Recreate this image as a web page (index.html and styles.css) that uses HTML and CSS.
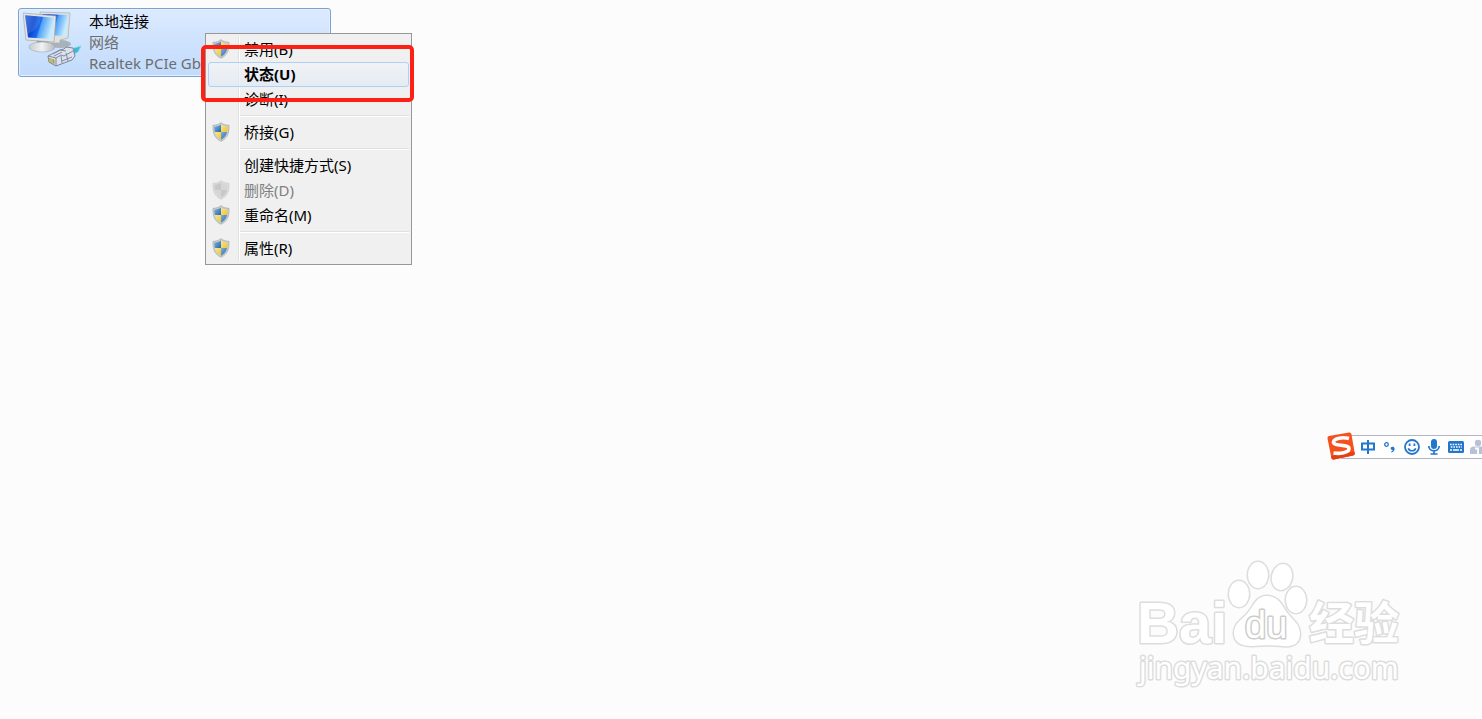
FILE: index.html
```html
<!DOCTYPE html>
<html lang="zh-CN">
<head>
	<meta charset="UTF-8">
	<meta name="viewport" content="width=device-width, initial-scale=1">
	<title>网络连接</title>
	<link rel="stylesheet" href="styles.css">
</head>
<body>
	<svg class="defs" aria-hidden="true">
		<linearGradient id="blue" x1="0" y1="0" x2="1" y2="1">
			<stop offset="0" stop-color="#7fb2dd"/>
			<stop offset="1" stop-color="#2468b4"/>
		</linearGradient>
		<linearGradient id="yellow" x1="0" y1="0" x2="1" y2="1">
			<stop offset="0" stop-color="#fbe88c"/>
			<stop offset="1" stop-color="#eec32c"/>
		</linearGradient>
		<symbol id="shield" viewBox="0 0 18 20">
			<path d="M9 .6C11 2.400 13.500 3.200 17 3.300c.2 7.600-1.200 12.700-8 16C2.200 16 .8 10.900 1 3.300 4.500 3.200 7 2.400 9 .6z" fill="#c9cdce" stroke="#a4abae" stroke-width=".7"/>
			<path d="M9 2.600V10H2.900C2.400 8.200 2.300 6.600 2.400 4.700 5 4.500 7.200 4 9 2.600z" fill="url(#blue)"/>
			<path d="M9 2.600V10h6.100c.5-1.800.6-3.400.5-5.300C13 4.500 10.800 4 9 2.600z" fill="url(#yellow)"/>
			<path d="M9 10H2.900c.9 3.500 2.600 6 6.100 7.800z" fill="url(#yellow)"/>
			<path d="M9 10h6.100c-.9 3.500-2.600 6-6.100 7.800z" fill="url(#blue)"/>
		</symbol>
		<symbol id="shield-off" viewBox="0 0 18 20">
			<path d="M9 .6C11 2.400 13.500 3.200 17 3.300c.2 7.600-1.200 12.700-8 16C2.200 16 .8 10.900 1 3.300 4.500 3.200 7 2.400 9 .6z" fill="#dcdcdc" stroke="#cbcbcb" stroke-width=".7"/>
			<path d="M9 2.600V10H2.900C2.400 8.200 2.300 6.600 2.400 4.700 5 4.500 7.200 4 9 2.600zM9 10h6.100c-.9 3.500-2.600 6-6.100 7.800z" fill="#c8c8c8"/>
			<path d="M9 2.600V10h6.100c.5-1.800.6-3.400.5-5.300C13 4.500 10.800 4 9 2.600zM9 10H2.900c.9 3.500 2.600 6 6.100 7.800z" fill="#d6d6d6"/>
		</symbol>
	</svg>

	<main class="connections">
		<div class="connection">
			<svg class="connection-icon" width="60" height="60" viewBox="0 0 60 60" aria-hidden="true">
				<defs>
					<linearGradient id="screen" x1="0" y1="0" x2="1" y2=".25">
						<stop offset="0" stop-color="#2a62dc"/>
						<stop offset=".35" stop-color="#0b45cf"/>
						<stop offset=".58" stop-color="#1a6cf0"/>
						<stop offset=".62" stop-color="#4f9ff6"/>
						<stop offset="1" stop-color="#c4ecff"/>
					</linearGradient>
					<linearGradient id="base" x1="0" y1="0" x2="1" y2="0">
						<stop offset="0" stop-color="#c9cdce"/>
						<stop offset=".5" stop-color="#f1f2f2"/>
						<stop offset="1" stop-color="#b4babd"/>
					</linearGradient>
				</defs>
				<ellipse cx="37" cy="33" rx="11" ry="4" fill="#a8b2b9"/>
				<path d="M17 1l30 1-2 25-8 2v3H20z" fill="#dfe1e0" stroke="#a9aeb0" stroke-width=".7"/>
				<path d="M19 3l26 1-2 21-23-1z" fill="url(#screen)"/>
				<path d="M14 29h11l2 6H13z" fill="#8e979c"/>
				<ellipse cx="19" cy="36" rx="13" ry="5" fill="url(#base)" stroke="#a0a8ac" stroke-width=".6"/>
				<path d="M0 2l33 3-2 26-28-2z" fill="#e4e5e3" stroke="#a3a8aa" stroke-width=".7"/>
				<path d="M2 4.200l29 2.600-2 21.200-24-1.500z" fill="url(#screen)"/>
				<path d="M2 4.200l16 1.500C17 14 13 20 4 23z" fill="#fff" opacity=".12"/>
				<path d="M45 41l6-4 7-2-3 6-8 4z" fill="#3cb8da" stroke="#8bd8ea"/>
				<path d="M25 45l12-6 4-1 2-2 7 1 2 8-3 4-16 6-7-4z" fill="#dce1ea" stroke="#7a869b"/>
				<path d="M25 45l8 2 5-3 3 1 9-5M33 47v8M30 43l7-4 6 1M38 45l1 7M43 42l2 8M39 50l10-4M31 45l8-4" fill="none" stroke="#7e8ba2"/>
				<path d="M25.500 47l6 1.500v4.500l-6-2z" fill="#999d6c"/>
				<path d="M27 48v3M29 48v4" stroke="#e2d873"/>
			</svg>
			<div class="connection-text">
				<div class="connection-name">本地连接</div>
				<div>网络</div>
				<div>Realtek PCIe Gb</div>
			</div>
		</div>
	</main>

	<div class="menu" role="menu">
		<button class="item" role="menuitem"><svg class="shield"><use href="#shield"/></svg>禁用(B)</button>
		<button class="item current" role="menuitem">状态(U)</button>
		<button class="item" role="menuitem">诊断(I)</button>
		<hr>
		<button class="item" role="menuitem"><svg class="shield"><use href="#shield"/></svg>桥接(G)</button>
		<hr>
		<button class="item" role="menuitem">创建快捷方式(S)</button>
		<button class="item" role="menuitem" disabled><svg class="shield"><use href="#shield-off"/></svg>删除(D)</button>
		<button class="item" role="menuitem"><svg class="shield"><use href="#shield"/></svg>重命名(M)</button>
		<hr>
		<button class="item" role="menuitem"><svg class="shield"><use href="#shield"/></svg>属性(R)</button>
	</div>
	<div class="marker"></div>

	<div class="ime">
		<svg class="ime-logo" width="30" height="30" viewBox="0 0 30 30" aria-hidden="true">
			<path d="M3 5L23 1.500q2-.3 2.400 1.600l3.300 19q.3 2-1.600 2.500L8 28.500q-2.200.4-2.600-1.600L1.500 7.500Q1.200 5.400 3 5z" fill="#f4511e"/>
			<path d="M5 25l23.500-4 .2 1q.3 2-1.600 2.500L8 28.500q-2.200.4-2.600-1.600z" fill="#e53e12"/>
			<path d="M23 7.500C17 6 8 7 7.500 11c-.5 4.500 15.500 2 15.500 6.500 0 4.500-9.500 5.500-15.500 4.500" fill="none" stroke="#fff" stroke-width="3.600"/>
		</svg>
		<button class="ime-button" aria-label="中文"><svg width="16" height="16" viewBox="0 0 16 16"><path d="M2 4.500h12v6H2zM8 1v14" fill="none" stroke="#2277cc" stroke-width="2"/></svg></button>
		<button class="ime-button" aria-label="标点"><svg width="16" height="16" viewBox="0 0 16 16"><circle cx="4.500" cy="5.500" r="1.800" fill="none" stroke="#2277cc" stroke-width="1.300"/><path d="M9 8.300c1-1 3.600-.8 3.600 1.500 0 2-1.200 3.200-3.200 3.800l-.3-1c1-.3 1.500-.8 1.600-1.500-1.700.2-2.600-1.600-1.700-2.800z" fill="#2277cc"/></svg></button>
		<button class="ime-button" aria-label="表情"><svg width="16" height="16" viewBox="0 0 16 16"><circle cx="8" cy="8" r="7" fill="none" stroke="#2277cc" stroke-width="1.800"/><path d="M5.600 4.500v2.500M10.400 4.500v2.500" stroke="#2277cc" stroke-width="1.800"/><path d="M4.300 9.200c1 3.500 6.400 3.500 7.400 0" fill="none" stroke="#2277cc" stroke-width="1.500"/></svg></button>
		<button class="ime-button" aria-label="语音"><svg width="16" height="16" viewBox="0 0 16 16"><rect x="5" y="0" width="6" height="10" rx="3" fill="#2277cc"/><path d="M2.800 7c0 6.500 10.400 6.500 10.400 0M8 12v3M4.500 15h7" fill="none" stroke="#2277cc" stroke-width="1.700"/></svg></button>
		<button class="ime-button" aria-label="键盘"><svg width="16" height="16" viewBox="0 0 16 16"><rect y="2" width="16" height="12" rx="1.500" fill="#2277cc"/><path d="M2 5.500h12M2.800 8h11" stroke="#fff" stroke-width="1.400" stroke-dasharray="1.600 1"/><path d="M2 11h2M5 11h6M12 11h2" stroke="#fff" stroke-width="1.400"/></svg></button>
		<button class="ime-button" aria-label="用户"><svg width="16" height="16" viewBox="0 0 16 16"><circle cx="8" cy="4" r="3.200" fill="#b7c2d6"/><path d="M0 15v-4q0-3.500 4-3.500h10V15z" fill="#b7c2d6"/><path d="M5 9.500h3V15" fill="none" stroke="#fff" stroke-width="1.800"/></svg></button>
	</div>

	<svg class="watermark" width="280" height="136" viewBox="0 0 280 136" role="img" aria-label="Baidu 经验">
		<g class="paw">
			<ellipse cx="105" cy="39" rx="10" ry="13"/>
			<ellipse cx="124" cy="20" rx="10" ry="13"/>
			<ellipse cx="148" cy="22" rx="10" ry="13" transform="rotate(12 148 22)"/>
			<ellipse cx="162" cy="45" rx="10" ry="13"/>
			<path d="M133 41c12 0 15 10 21 18 6 7 12 11 12 20 0 10-8 13-17 12-11-1-21-1-31 0-10 0-18-3-18-13 0-9 6-12 13-19 7-8 9-18 20-18z"/>
		</g>
		<text class="wm-bai" x="3" y="88">Bai</text>
		<text class="wm-du" x="111" y="83">du</text>
		<text class="wm-cn" x="175" y="85">经验</text>
		<text class="wm-url" x="5" y="124">jingyan.baidu.com</text>
	</svg>
</body>
</html>
```

FILE: styles.css
```css
* { box-sizing: border-box; }
html, body { margin: 0; padding: 0; }
body { position: relative; min-height: 100vh; overflow: hidden; background: #fcfcfc; color: #000; font: 15px/21px "Noto Sans", "Noto Sans CJK SC", sans-serif; }
button { margin: 0; padding: 0; border: 0; background: none; color: inherit; font: inherit; }
.defs { position: absolute; width: 0; height: 0; }

.connections { display: flex; padding: 8px 18px; }
.connection { display: flex; gap: 6px; width: 313px; height: 69px; padding: 2px 4px; border: 1px solid #7da2ce; border-radius: 3px; background: linear-gradient(#dceaff, #c1dbfc); box-shadow: inset 0 0 0 1px #e4efff; }
.connection-icon { flex: none; }
.connection-text { color: #6d6d6d; white-space: nowrap; }
.connection-name { color: #000; }

/* context menu, opened over the selected connection */
.menu { position: absolute; left: 205px; top: 33px; width: 207px; padding: 3px 2px; border: 1px solid #979797; background: linear-gradient(90deg, transparent 32px, #e0e0e0 32px, #e0e0e0 33px, #fff 33px, #fff 34px, transparent 34px) 0 3px / 100% calc(100% - 6px) no-repeat #f0f0f0; }
.item { display: flex; align-items: center; position: relative; width: 100%; height: 25px; padding: 0 0 1px 35px; border: 1px solid transparent; border-radius: 3px; text-align: left; white-space: nowrap; }
.item:disabled { color: #808080; }
.current { border-color: #aecff7; background: linear-gradient(rgba(240, 244, 250, .6), rgba(224, 233, 244, .7)); font-weight: bold; }
.shield { position: absolute; left: 3px; top: 1px; width: 18px; height: 20px; }
.menu hr { height: 2px; margin: 3px 0 3px 32px; border: 0; border-top: 1px solid #e0e0e0; border-bottom: 1px solid #fff; }
.marker { position: absolute; left: 201px; top: 45px; width: 213px; height: 57px; border: 4px solid #ff2014; border-radius: 5px; pointer-events: none; }

.ime { display: flex; align-items: center; gap: 6px; position: absolute; right: -5px; top: 435px; height: 24px; padding-left: 18px; border: 1px solid #b5b5c4; background: #fff; }
.ime-logo { position: absolute; left: -16px; top: -5px; }
.ime-button { display: flex; width: 16px; height: 16px; }

.watermark { position: absolute; right: 68px; top: 555px; }
.watermark text, .paw { fill: #fff; stroke: #ddd; stroke-width: 3px; stroke-linejoin: round; paint-order: stroke; }
.watermark .wm-bai { font: bold 58px "Liberation Sans", sans-serif; }
.watermark .wm-du { font: 38px "Liberation Sans", sans-serif; stroke: #ccc; }
.watermark .wm-cn { font: bold 45px "Noto Sans CJK SC", sans-serif; }
.watermark .wm-url { font: 30px "Noto Sans", sans-serif; }
```
